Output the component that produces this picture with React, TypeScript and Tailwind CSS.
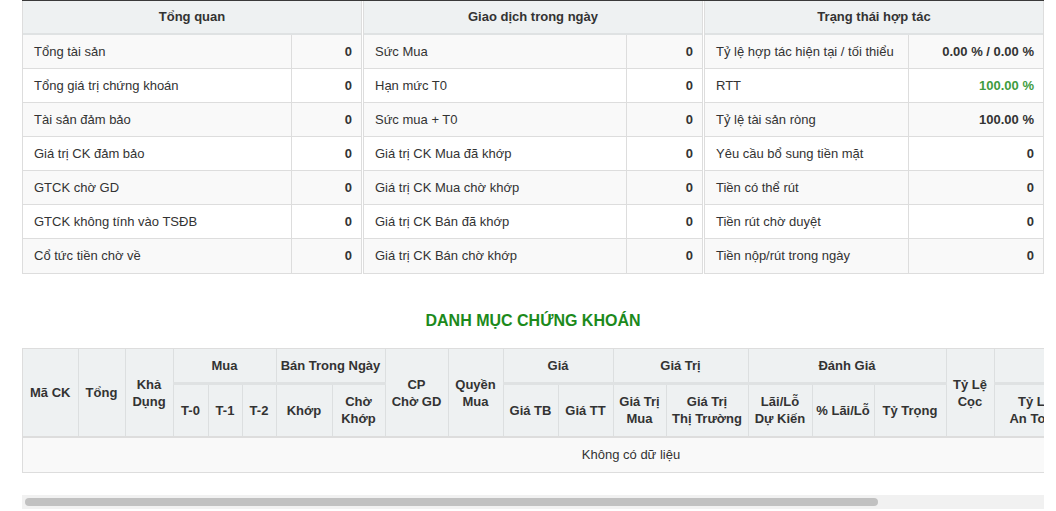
import React from "react";

type Row = { label: string; value: string; green?: boolean };

const overview: Row[] = [
  { label: "Tổng tài sản", value: "0" },
  { label: "Tổng giá trị chứng khoán", value: "0" },
  { label: "Tài sản đảm bảo", value: "0" },
  { label: "Giá trị CK đảm bảo", value: "0" },
  { label: "GTCK chờ GD", value: "0" },
  { label: "GTCK không tính vào TSĐB", value: "0" },
  { label: "Cổ tức tiền chờ về", value: "0" },
];

const intraday: Row[] = [
  { label: "Sức Mua", value: "0" },
  { label: "Hạn mức T0", value: "0" },
  { label: "Sức mua + T0", value: "0" },
  { label: "Giá trị CK Mua đã khớp", value: "0" },
  { label: "Giá trị CK Mua chờ khớp", value: "0" },
  { label: "Giá trị CK Bán đã khớp", value: "0" },
  { label: "Giá trị CK Bán chờ khớp", value: "0" },
];

const status: Row[] = [
  { label: "Tỷ lệ hợp tác hiện tại / tối thiểu", value: "0.00 % / 0.00 %" },
  { label: "RTT", value: "100.00 %", green: true },
  { label: "Tỷ lệ tài sản ròng", value: "100.00 %" },
  { label: "Yêu cầu bổ sung tiền mặt", value: "0" },
  { label: "Tiền có thể rút", value: "0" },
  { label: "Tiền rút chờ duyệt", value: "0" },
  { label: "Tiền nộp/rút trong ngày", value: "0" },
];

function SummaryPanel({ title, rows, labelWidth }: { title: string; rows: Row[]; labelWidth: string }) {
  return (
    <div className="border border-t-0 border-[#dddddd]">
      <div className="h-[34px] flex items-center justify-center bg-[#eef1f2] border-b-2 border-[#dfe2e3] font-bold">
        {title}
      </div>
      {rows.map((r, i) => (
        <div
          key={r.label}
          className={`flex h-[34px] border-b border-[#dddddd] last:border-b-0 ${i % 2 === 0 ? "bg-[#f9f9f9]" : "bg-white"}`}
        >
          <div className={`${labelWidth} flex items-center pl-[11px] border-r border-[#dddddd]`}>{r.label}</div>
          <div
            className={`flex-1 flex items-center justify-end pr-[9px] font-bold ${r.green ? "text-[#3f9c3f]" : ""}`}
          >
            {r.value}
          </div>
        </div>
      ))}
    </div>
  );
}

const th = "border border-[#dcdfe0] font-bold text-center align-middle leading-[17px] px-0 whitespace-pre";

export default function App() {
  return (
    <div className="bg-white min-h-[511px] text-[13px] text-[#333333] font-['Liberation_Sans',Arial,sans-serif]">
      <div className="ml-[22px] w-[1022px]">
        <div className="h-[1px] bg-[#3a3a3a]" />
        <div className="grid grid-cols-3 gap-[1px]">
          <SummaryPanel title="Tổng quan" rows={overview} labelWidth="w-[269px]" />
          <SummaryPanel title="Giao dịch trong ngày" rows={intraday} labelWidth="w-[263px]" />
          <SummaryPanel title="Trạng thái hợp tác" rows={status} labelWidth="w-[204px]" />
        </div>

        <h2 className="mt-[37px] text-center text-[16px] font-bold text-[#1c8a1c] leading-[20px]">
          DANH MỤC CHỨNG KHOÁN
        </h2>

        <div className="mt-[17px] overflow-hidden border border-[#dddddd] border-r-0">
          <table className="table-fixed border-collapse w-[1216px]">
            <colgroup>
              {[55, 47, 48, 35, 34, 34, 56, 53, 63, 55, 55, 55, 53, 82, 64, 62, 72, 48, 82, 80, 83].map((w, i) => (
                <col key={i} style={{ width: w }} />
              ))}
            </colgroup>
            <thead className="bg-[#eef1f2]">
              <tr className="h-[34px]">
                <th rowSpan={2} className={`${th} border-l-0 border-t-0 border-b-2 border-b-[#dddddd]`}>Mã CK</th>
                <th rowSpan={2} className={`${th} border-t-0 border-b-2 border-b-[#dddddd]`}>Tổng</th>
                <th rowSpan={2} className={`${th} border-t-0 border-b-2 border-b-[#dddddd]`}>{"Khả\nDụng"}</th>
                <th colSpan={3} className={`${th} border-t-0 border-b-[3px] border-b-[#dfe2e3]`}>Mua</th>
                <th colSpan={2} className={`${th} border-t-0 border-b-[3px] border-b-[#dfe2e3]`}>Bán Trong Ngày</th>
                <th rowSpan={2} className={`${th} border-t-0 border-b-2 border-b-[#dddddd]`}>{"CP\nChờ GD"}</th>
                <th rowSpan={2} className={`${th} border-t-0 border-b-2 border-b-[#dddddd]`}>{"Quyền\nMua"}</th>
                <th colSpan={2} className={`${th} border-t-0 border-b-[3px] border-b-[#dfe2e3]`}>Giá</th>
                <th colSpan={2} className={`${th} border-t-0 border-b-[3px] border-b-[#dfe2e3]`}>Giá Trị</th>
                <th colSpan={3} className={`${th} border-t-0 border-b-[3px] border-b-[#dfe2e3]`}>Đánh Giá</th>
                <th rowSpan={2} className={`${th} border-t-0 border-b-2 border-b-[#dddddd]`}>{"Tỷ Lệ\nCọc"}</th>
                <th colSpan={3} className={`${th} border-t-0 border-b-[3px] border-b-[#dfe2e3]`}>Ký Quỹ</th>
              </tr>
              <tr className="h-[54px]">
                {[
                  "T-0",
                  "T-1",
                  "T-2",
                  "Khớp",
                  "Chờ\nKhớp",
                  "Giá TB",
                  "Giá TT",
                  "Giá Trị\nMua",
                  "Giá Trị\nThị Trường",
                  "Lãi/Lỗ\nDự Kiến",
                  "% Lãi/Lỗ",
                  "Tỷ Trọng",
                  "Tỷ Lệ\nAn Toàn",
                  "Tỷ Lệ\nDuy Trì",
                  "Tỷ Lệ\nXử Lý",
                ].map((t) => (
                  <th key={t} className={`${th} border-b-2 border-b-[#dddddd]`}>
                    {t}
                  </th>
                ))}
              </tr>
            </thead>
            <tbody>
              <tr className="h-[35px] bg-[#f9f9f9]">
                <td colSpan={21} className="text-center align-middle">
                  Không có dữ liệu
                </td>
              </tr>
            </tbody>
          </table>
        </div>

        <div className="mt-[22px] h-[14px] bg-[#f1f1f1] flex items-center px-[3px]">
          <div className="h-[8px] w-[853px] rounded-full bg-[#c1c1c1]" />
        </div>
      </div>
    </div>
  );
}
